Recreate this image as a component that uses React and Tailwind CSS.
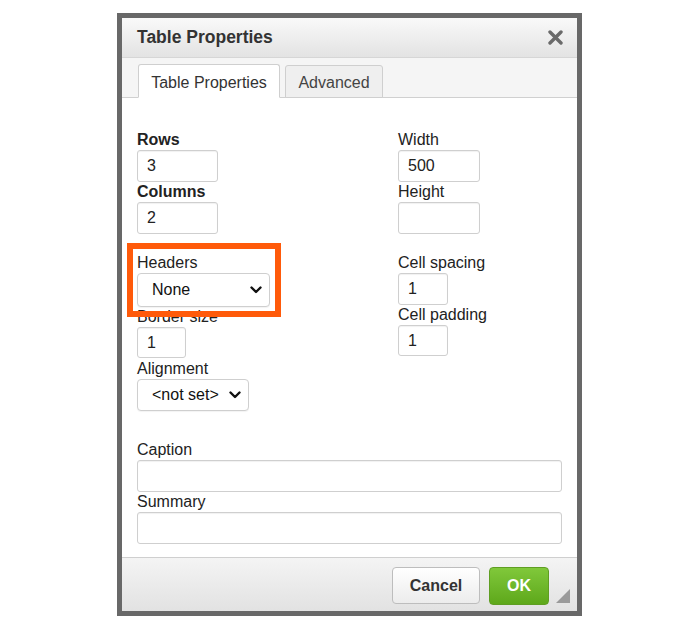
import React from "react";

const font = { fontFamily: '"Liberation Sans", Arial, sans-serif' };

function Label({ children, bold }) {
  return (
    <div className={`h-[18px] text-[16px] leading-[20px] text-[#222] ${bold ? "font-bold" : ""}`}>
      {children}
    </div>
  );
}

function Input({ value, w, h = "h-[32px]" }) {
  return (
    <div
      className={`mt-[2px] ${h} ${w} flex items-center rounded-[3px] border border-[#cfcfcf] bg-white pl-[9px] text-[16px] text-[#222] shadow-[inset_0_1px_1px_rgba(0,0,0,0.06)]`}
    >
      {value}
    </div>
  );
}

function Chevron() {
  return (
    <svg width="12" height="8" viewBox="0 0 12 8" className="shrink-0">
      <path d="M1.5 1.5 L6 6 L10.5 1.5" fill="none" stroke="#111" strokeWidth="2.4" strokeLinecap="round" strokeLinejoin="round" />
    </svg>
  );
}

function Select({ value, w, h }) {
  return (
    <div
      className={`mt-[2px] ${h} ${w} flex items-center justify-between rounded-[4px] border border-[#cfcfcf] bg-white pl-[14px] pr-[7px] text-[16px] text-[#111] shadow-[0_1px_1px_rgba(0,0,0,0.05)]`}
    >
      <span>{value}</span>
      <Chevron />
    </div>
  );
}

export default function App() {
  return (
    <div className="min-h-[630px] w-[700px] bg-white pt-[13px]" style={font}>
      <div className="relative ml-[117px] w-[465px] border-[5px] border-[#686868] bg-white">
        {/* Title bar */}
        <div className="flex h-[39px] items-center justify-between bg-gradient-to-b from-[#f9f9f9] to-[#e3e3e3] pl-[15px] pr-[14px]">
          <span className="text-[17.5px] font-bold text-[#333]">Table Properties</span>
          <svg width="15" height="15" viewBox="0 0 15 15">
            <path d="M2 2 L13 13 M13 2 L2 13" stroke="#6a6a6a" strokeWidth="3.4" strokeLinecap="round" />
          </svg>
        </div>
        {/* Tabs */}
        <div className="flex h-[41px] items-end gap-[5px] border-t border-b border-t-[#d6d6d6] border-b-[#d0d0d0] bg-[#f5f5f5] pl-[16px]">
          <div className="-mb-px flex h-[34px] w-[142px] items-center justify-center rounded-t-[3px] border border-[#cfcfcf] border-b-white bg-white pt-[3px] text-[16px] text-[#333]">
            Table Properties
          </div>
          <div className="-mb-px flex h-[33px] w-[98px] items-center justify-center rounded-t-[3px] border border-[#cfcfcf] bg-[#efefef] pt-[2px] text-[16px] text-[#444]">
            Advanced
          </div>
        </div>
        {/* Body */}
        <div className="h-[459px] bg-white pl-[15px] pt-[32px]">
          <div className="flex">
            <div className="w-[261px]">
              <Label bold>Rows</Label>
              <Input value="3" w="w-[81px]" />
              <Label bold>Columns</Label>
              <Input value="2" w="w-[81px]" />
              <div className="h-[19px]" />
              <Label>Headers</Label>
              <Select value="None" w="w-[133px]" h="h-[34px]" />
              <Label>Border size</Label>
              <Input value="1" w="w-[49px]" h="h-[31px]" />
              <div className="h-[1px]" />
              <Label>Alignment</Label>
              <Select value="<not set>" w="w-[112px]" h="h-[32px]" />
            </div>
            <div>
              <Label>Width</Label>
              <Input value="500" w="w-[82px]" />
              <Label>Height</Label>
              <Input value="" w="w-[82px]" />
              <div className="h-[19px]" />
              <Label>Cell spacing</Label>
              <Input value="1" w="w-[50px]" />
              <Label>Cell padding</Label>
              <Input value="1" w="w-[50px]" h="h-[31px]" />
            </div>
          </div>
          <div className="h-[29px]" />
          <Label>Caption</Label>
          <Input value="" w="w-[425px]" />
          <Label>Summary</Label>
          <Input value="" w="w-[425px]" />
        </div>
        {/* Footer */}
        <div className="relative flex h-[54px] justify-end gap-[9px] border-t border-[#cfcfcf] bg-gradient-to-b from-[#f4f4f4] to-[#e2e2e2] pr-[28px] pt-[9px]">
          <button className="h-[37px] w-[88px] rounded-[4px] border border-[#bdbdbd] bg-gradient-to-b from-white to-[#ececec] text-[16px] font-bold text-[#333]">
            Cancel
          </button>
          <button className="h-[38px] w-[60px] rounded-[4px] border border-[#5f9e22] bg-gradient-to-b from-[#80c83a] to-[#5ea81a] text-[16px] font-bold text-white">
            OK
          </button>
          <svg width="14" height="14" viewBox="0 0 14 14" className="absolute bottom-[8px] right-[7px]">
            <path d="M14 0 L14 14 L0 14 Z" fill="#9a9a9a" />
          </svg>
        </div>
        {/* Highlight overlay */}
        <div className="pointer-events-none absolute left-[5px] top-[225px] h-[74px] w-[154px] border-[6px] border-[#ff5a0a]" />
      </div>
    </div>
  );
}
